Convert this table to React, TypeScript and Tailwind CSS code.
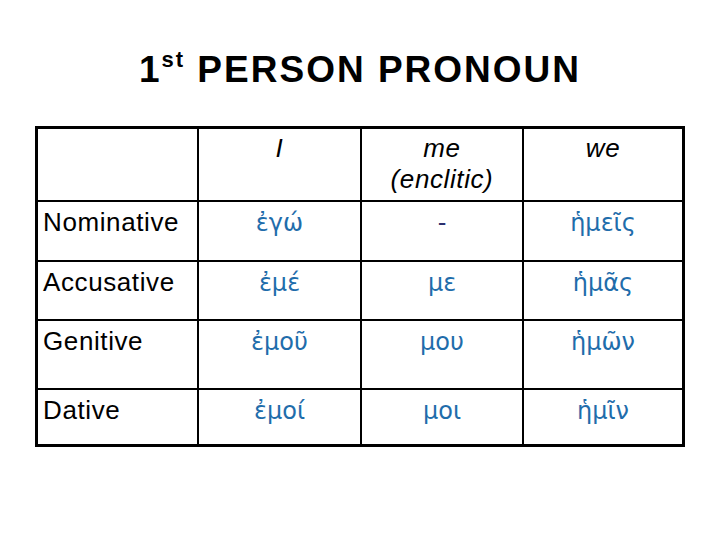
import React from "react";

const rows = [
  { label: "Nominative", values: ["ἐγώ", "-", "ἡμεῖς"], h: "h-[60px]" },
  { label: "Accusative", values: ["ἐμέ", "με", "ἡμᾶς"], h: "h-[59px]" },
  { label: "Genitive", values: ["ἐμοῦ", "μου", "ἡμῶν"], h: "h-[69px]" },
  { label: "Dative", values: ["ἐμοί", "μοι", "ἡμῖν"], h: "h-[54px]" },
];

const label = "font-['Liberation_Sans',Arial,sans-serif] text-[26px] tracking-[0.6px] leading-[31px] text-black";
const greek = "font-['DejaVu_Sans','Noto_Sans',sans-serif] text-[24px] leading-[31px]";

export default function App() {
  return (
    <div className="min-h-screen w-[720px] bg-white">
      <h1 className="pt-[51px] text-center font-['Liberation_Sans',Arial,sans-serif] text-[37px] font-bold leading-[36px] tracking-[2px] text-black">
        1<sup className="relative -top-[2px] text-[22px] align-super leading-none">st</sup> PERSON PRONOUN
      </h1>
      <div className="ml-[35px] mt-[38px] w-[650px] border-[3px] border-black">
        <div className="grid grid-cols-[161px_163px_162px_158px]">
          <div className="h-[73px] border-b-2 border-r-2 border-black" />
          <div className={`h-[73px] border-b-2 border-r-2 border-black pt-[4px] text-center italic ${label}`}>I</div>
          <div className={`h-[73px] border-b-2 border-r-2 border-black pt-[4px] text-center italic ${label}`}>
            me
            <br />
            (enclitic)
          </div>
          <div className={`h-[73px] border-b-2 border-black pt-[4px] text-center italic ${label}`}>we</div>
          {rows.map((r, i) => {
            const last = i === rows.length - 1;
            const bb = last ? "" : "border-b-2";
            return (
              <React.Fragment key={r.label}>
                <div className={`${r.h} ${bb} border-r-2 border-black pl-[5px] pt-[5px] ${label}`}>{r.label}</div>
                {r.values.map((v, j) => (
                  <div
                    key={j}
                    className={`${r.h} ${bb} ${j < 2 ? "border-r-2" : ""} border-black pt-[6px] text-center ${greek} ${
                      v === "-" ? "text-[#2b2f6e]" : "text-[#1f6dab]"
                    }`}
                  >
                    {v}
                  </div>
                ))}
              </React.Fragment>
            );
          })}
        </div>
      </div>
    </div>
  );
}
